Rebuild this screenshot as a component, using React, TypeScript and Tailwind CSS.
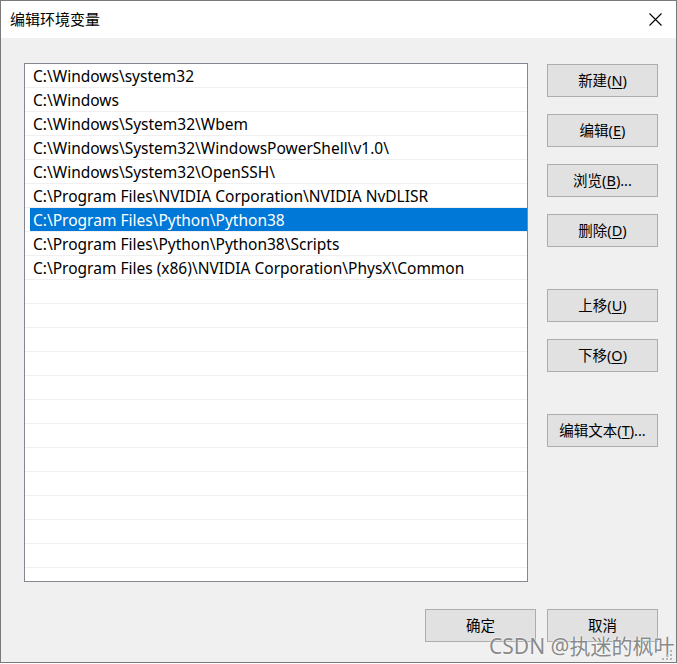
import { FC } from "react";

const paths = [
  "C:\\Windows\\system32",
  "C:\\Windows",
  "C:\\Windows\\System32\\Wbem",
  "C:\\Windows\\System32\\WindowsPowerShell\\v1.0\\",
  "C:\\Windows\\System32\\OpenSSH\\",
  "C:\\Program Files\\NVIDIA Corporation\\NVIDIA NvDLISR",
  "C:\\Program Files\\Python\\Python38",
  "C:\\Program Files\\Python\\Python38\\Scripts",
  "C:\\Program Files (x86)\\NVIDIA Corporation\\PhysX\\Common",
];

const FONT = "font-['Segoe_UI','Noto_Sans','Noto_Sans_CJK_SC',sans-serif]";

// dialog button with underlined access key
const Btn: FC<{ label: string; hot?: string; tail?: string; className?: string }> = ({ label, hot, tail, className }) => (
  <div
    className={`flex h-[33px] w-[111px] items-center justify-center border border-[#adadad] bg-[#e1e1e1] pt-[1px] text-[14.5px] text-black ${className ?? ""}`}
  >
    {label}
    {hot && (
      <>
        (<span className="underline underline-offset-2">{hot}</span>)
      </>
    )}
    {tail}
  </div>
);

export default function App() {
  const rows = Array.from({ length: 21 }, (_, i) => paths[i] ?? "");
  return (
    <div className={`relative h-[664px] w-[677px] overflow-hidden bg-white ${FONT}`}>
      <div className="flex h-[663px] flex-col border border-[#7a7a7a] bg-[#f0f0f0]">
        {/* title bar */}
        <div className="flex h-[37px] items-center bg-white pl-[9px] pr-[14px]">
          <span className="text-[15px] text-black">编辑环境变量</span>
          <div className="flex-grow" />
          <svg width="13" height="13" viewBox="0 0 13 13">
            <path d="M0.5 0.5 L12.5 12.5 M12.5 0.5 L0.5 12.5" stroke="#000" strokeWidth="1.1" />
          </svg>
        </div>

        <div className="flex pl-[23px] pt-[25px]">
          {/* list */}
          <div className="h-[519px] w-[504px] overflow-hidden border border-[#828790] bg-white">
            {rows.map((p, i) => (
              <div key={i} className="h-[24px] border-b border-[#f0f0f0] pl-[5px]">
                <div
                  className={`flex h-[23px] items-center pl-[3px] pt-[3px] text-[15.5px] ${
                    i === 6 ? "bg-[#0078d7] text-white" : "text-black"
                  }`}
                >
                  {p}
                </div>
              </div>
            ))}
          </div>

          {/* side buttons */}
          <div className="ml-[19px] flex flex-col pt-[1px]">
            <Btn label="新建" hot="N" />
            <Btn label="编辑" hot="E" className="mt-[17px]" />
            <Btn label="浏览" hot="B" tail="..." className="mt-[17px]" />
            <Btn label="删除" hot="D" className="mt-[17px]" />
            <Btn label="上移" hot="U" className="mt-[42px]" />
            <Btn label="下移" hot="O" className="mt-[17px]" />
            <Btn label="编辑文本" hot="T" tail="..." className="mt-[42px]" />
          </div>
        </div>

        <div className="mt-[27px] flex justify-end gap-[11px] pr-[18px]">
          <Btn label="确定" />
          <Btn label="取消" />
        </div>
      </div>

      {/* watermark */}
      <div className="absolute left-[489px] top-[631px] text-[21px] leading-[30px] text-[#8a8a8a] [text-shadow:0_0_2px_#fff,0_0_1px_#fff]">
        CSDN @执迷的枫叶
      </div>

      {/* size grip */}
      <svg className="absolute left-[662px] top-[650px]" width="12" height="12" viewBox="0 0 12 12">
        <g fill="#b5b5b5">
          <rect x="8" y="0" width="2" height="2" />
          <rect x="4" y="4" width="2" height="2" />
          <rect x="8" y="4" width="2" height="2" />
          <rect x="0" y="8" width="2" height="2" />
          <rect x="4" y="8" width="2" height="2" />
          <rect x="8" y="8" width="2" height="2" />
        </g>
      </svg>
    </div>
  );
}
